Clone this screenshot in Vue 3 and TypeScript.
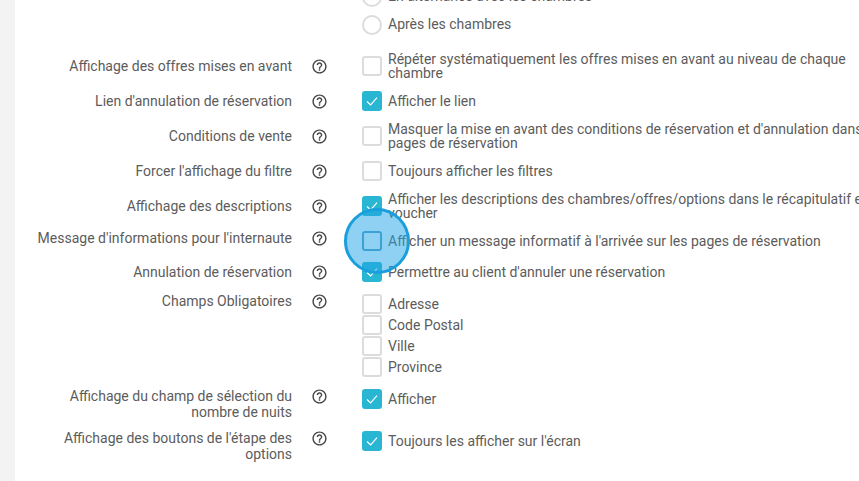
<script setup lang="ts">
interface Option {
  text: string
  checked?: boolean
  hovered?: boolean
}

interface Row {
  label: string
  top?: boolean
  fields?: boolean
  options: Option[]
}

const radios = ['En alternance avec les chambres', 'Après les chambres']

const rows: Row[] = [
  {
    label: 'Affichage des offres mises en avant',
    options: [{ text: 'Répéter systématiquement les offres mises en avant au niveau de chaque chambre' }],
  },
  {
    label: "Lien d'annulation de réservation",
    options: [{ text: 'Afficher le lien', checked: true }],
  },
  {
    label: 'Conditions de vente',
    options: [{ text: "Masquer la mise en avant des conditions de réservation et d'annulation dans les pages de réservation" }],
  },
  {
    label: "Forcer l'affichage du filtre",
    options: [{ text: 'Toujours afficher les filtres' }],
  },
  {
    label: 'Affichage des descriptions',
    options: [{ text: 'Afficher les descriptions des chambres/offres/options dans le récapitulatif et le voucher', checked: true }],
  },
  {
    label: "Message d'informations pour l'internaute",
    top: true,
    options: [{ text: "Afficher un message informatif à l'arrivée sur les pages de réservation", hovered: true }],
  },
  {
    label: 'Annulation de réservation',
    options: [{ text: "Permettre au client d'annuler une réservation", checked: true }],
  },
  {
    label: 'Champs Obligatoires',
    top: true,
    fields: true,
    options: [{ text: 'Adresse' }, { text: 'Code Postal' }, { text: 'Ville' }, { text: 'Province' }],
  },
  {
    label: 'Affichage du champ de sélection du nombre de nuits',
    top: true,
    options: [{ text: 'Afficher', checked: true }],
  },
  {
    label: "Affichage des boutons de l'étape des options",
    top: true,
    options: [{ text: "Toujours les afficher sur l'écran", checked: true }],
  },
]
</script>

<template>
  <div class="page">
    <main class="panel">
      <div class="radios">
        <label v-for="radio in radios" :key="radio" class="option">
          <span class="radio"></span>
          <span class="text radio-text">{{ radio }}</span>
        </label>
      </div>

      <div v-for="row in rows" :key="row.label" class="row" :class="{ top: row.top, fields: row.fields }">
        <div class="label">{{ row.label }}</div>
        <div class="help">
          <svg width="17" height="17" viewBox="0 0 24 24">
            <path
              fill="#444"
              d="M11 18h2v-2h-2v2zm1-16C6.48 2 2 6.48 2 12s4.48 10 10 10 10-4.48 10-10S17.52 2 12 2zm0 18c-4.41 0-8-3.59-8-8s3.59-8 8-8 8 3.59 8 8-3.59 8-8 8zm0-14c-2.21 0-4 1.79-4 4h2c0-1.1.9-2 2-2s2 .9 2 2c0 2-3 1.75-3 5h2c0-2.25 3-2.5 3-5 0-2.21-1.79-4-4-4z"
            />
          </svg>
        </div>
        <div class="options">
          <label v-for="option in row.options" :key="option.text" class="option">
            <span class="box" :class="{ checked: option.checked, hovered: option.hovered }">
              <svg v-if="option.checked" width="14" height="14" viewBox="0 0 14 14">
                <path d="M2 7.5 5.6 11 12 3.6" fill="none" stroke="#fff" stroke-width="1.2" />
              </svg>
            </span>
            <span class="text">{{ option.text }}</span>
          </label>
        </div>
      </div>
    </main>
    <div class="click-marker"></div>
  </div>
</template>

<style>
html,
body {
  margin: 0;
  overflow: hidden;
}
</style>

<style scoped>
.page {
  position: relative;
  width: 859px;
  height: 481px;
  overflow: hidden;
  background: #f3f3f3;
  padding-left: 15px;
  box-sizing: border-box;
  font-family: Roboto, "Liberation Sans", sans-serif;
  font-size: 14px;
  color: #5c5c5c;
}
.panel {
  width: 900px;
  height: 600px;
  margin-top: -13px;
  background: #fff;
}
.radios {
  display: flex;
  flex-direction: column;
  gap: 8px;
  margin-left: 347px;
  margin-bottom: 17px;
}
.row {
  display: grid;
  grid-template-columns: 277px 55px 551px;
  align-items: center;
  margin-bottom: 11px;
}
.row.top {
  align-items: start;
}
.row.fields {
  margin-top: 12px;
  margin-bottom: 12px;
}
.label {
  text-align: right;
  line-height: 16px;
  padding-left: 15px;
}
.help {
  display: flex;
  justify-content: center;
  padding-right: 1px;
}
.row.top .label,
.row.top .help {
  margin-top: -1px;
}
.options {
  display: flex;
  flex-direction: column;
  gap: 1px;
  padding-left: 15px;
}
.option {
  display: flex;
  align-items: center;
  gap: 6px;
}
.text {
  line-height: 14px;
}
.radio-text {
  padding-bottom: 2px;
}
.radio {
  flex: none;
  width: 20px;
  height: 20px;
  border: 2px solid #dcdcdc;
  border-radius: 50%;
  box-sizing: border-box;
}
.box {
  flex: none;
  display: flex;
  align-items: center;
  justify-content: center;
  width: 20px;
  height: 20px;
  border: 2px solid #dcdcdc;
  border-radius: 3px;
  box-sizing: border-box;
  background: #fff;
}
.box.checked {
  border-color: #29b6d3;
  background: #29b6d3;
}
.box.hovered {
  border-color: #5a9fc4;
}
.click-marker {
  position: absolute;
  left: 344px;
  top: 208px;
  width: 66px;
  height: 66px;
  box-sizing: border-box;
  border: 3px solid #1a9fdc;
  border-radius: 50%;
  background: rgba(31, 164, 230, 0.5);
}
</style>
